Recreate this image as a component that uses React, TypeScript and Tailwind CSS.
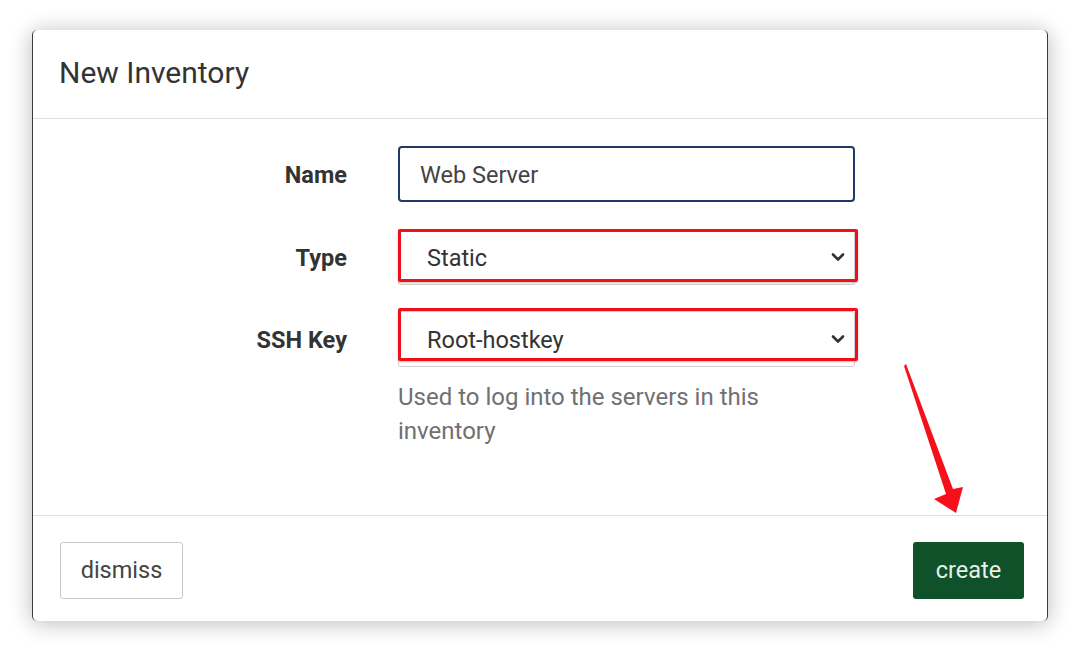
import React from "react";

const font = { fontFamily: "Roboto, 'Liberation Sans', Arial, sans-serif" };

function Chevron() {
  return (
    <svg width="14" height="10" viewBox="0 0 14 10" className="absolute right-[10px] top-1/2 -translate-y-1/2">
      <path d="M2 2.5 L7 7.5 L12 2.5" fill="none" stroke="#333" strokeWidth="2.6" strokeLinecap="round" strokeLinejoin="round" />
    </svg>
  );
}

function SelectBox({ value, redTop }: { value: string; redTop: number }) {
  return (
    <div className="relative w-[457px] h-[56px]">
      <div className="w-full h-full rounded-[3px] border border-[#cfcfcf] bg-white flex items-center pl-[28px] pt-[4px] text-[23.5px] text-[#333]">
        {value}
      </div>
      <Chevron />
      <div
        className="absolute left-0 w-[460px] h-[53px] border-[3px] border-[#f0101a] rounded-[2px] shadow-[0_1px_2px_rgba(0,0,0,0.25)]"
        style={{ top: redTop }}
      />
    </div>
  );
}

export default function App() {
  return (
    <div className="relative w-[1080px] h-[652px] bg-white pt-[30px] pl-[32px]" style={font}>
      <div className="w-[1016px] h-[591px] bg-white rounded-[5px] border-x border-[#3a3a3a] shadow-[0_2px_22px_rgba(0,0,0,0.28)] flex flex-col">
        <div className="h-[89px] border-b border-[#dedede] flex items-center pl-[26px] pb-[4px]">
          <h1 className="text-[30px] text-[#333] font-normal">New Inventory</h1>
        </div>
        <div className="flex-1 pt-[27px]">
          <div className="flex items-center">
            <label className="w-[314px] text-right text-[23.5px] font-bold text-[#333] pt-[4px]">Name</label>
            <div className="ml-[51px] w-[457px] h-[56px] rounded-[4px] border-2 border-[#1f3a66] flex items-center pl-[20px] pt-[4px] text-[23.5px] text-[#444]">
              Web Server
            </div>
          </div>
          <div className="flex items-center mt-[27px]">
            <label className="w-[314px] text-right text-[23.5px] font-bold text-[#333] pt-[4px]">Type</label>
            <div className="ml-[51px]">
              <SelectBox value="Static" redTop={0} />
            </div>
          </div>
          <div className="flex items-start mt-[26px]">
            <label className="w-[314px] h-[56px] flex items-center justify-end text-[23.5px] font-bold text-[#333] pt-[4px]">SSH Key</label>
            <div className="ml-[51px]">
              <SelectBox value="Root-hostkey" redTop={-3} />
              <p className="mt-[13px] w-[420px] text-[24px] leading-[34px] text-[#707070]">
                Used to log into the servers in this inventory
              </p>
            </div>
          </div>
        </div>
        <div className="h-[106px] border-t border-[#dedede] flex justify-between items-start pt-[26px] pl-[27px] pr-[23px]">
          <button className="h-[57px] w-[123px] rounded-[3px] border border-[#c8c8c8] bg-white text-[23.5px] text-[#444]">
            dismiss
          </button>
          <button className="h-[57px] w-[111px] rounded-[3px] bg-[#0f5229] text-[23.5px] text-[#e8f0e8]">
            create
          </button>
        </div>
      </div>
      <svg className="absolute left-0 top-0 pointer-events-none" width="1080" height="652">
        <polygon
          points="906,364 953,489 963,487 956,513 934,499 946,494 904,366"
          fill="#f5101c"
        />
      </svg>
    </div>
  );
}
